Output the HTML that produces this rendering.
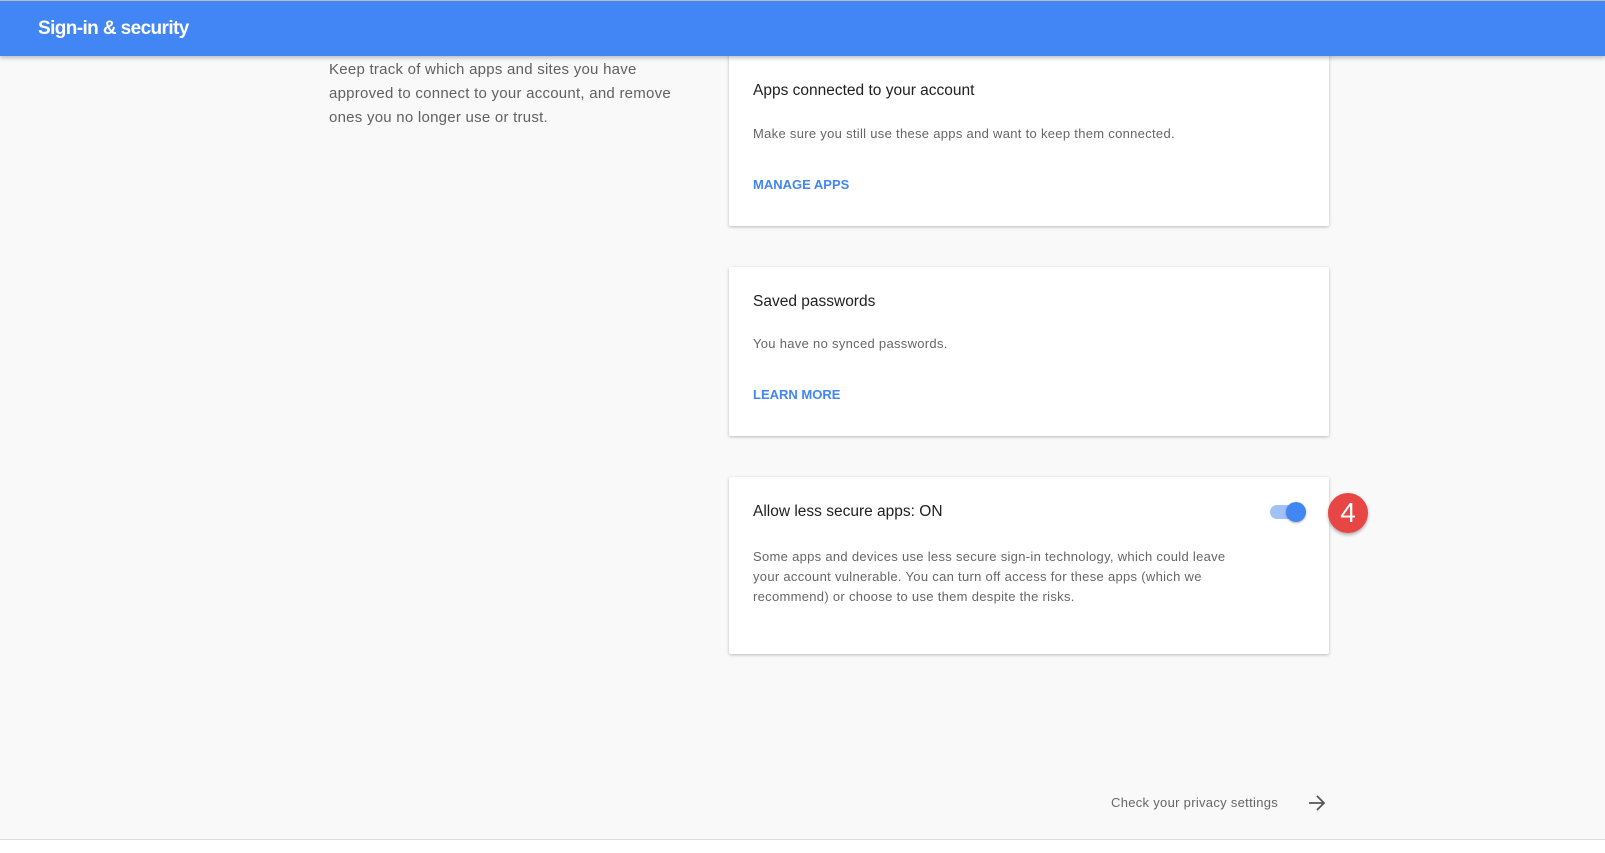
<!DOCTYPE html><html><head><style>
*{margin:0;padding:0;box-sizing:border-box}
body{width:1605px;height:853px;background:#f9f9f9;font-family:"Liberation Sans",sans-serif;position:relative;overflow:hidden}
.hdr{position:absolute;left:0;top:0;width:1605px;height:56px;background:#4285f4;border-top:1px solid #bbb;box-shadow:0 2px 4px rgba(0,0,0,.25);z-index:2}
.hdr span{position:absolute;left:38px;top:17px;color:#fff;font-size:19px;font-weight:bold;letter-spacing:-.6px}
.lt{position:absolute;left:329px;top:58px;width:370px;font-size:15px;line-height:24px;color:#616161;letter-spacing:.25px}
.card{position:absolute;left:729px;width:600px;background:#fff;box-shadow:0 1px 3px rgba(0,0,0,.25);border-radius:2px}
.t{position:absolute;left:24px;font-size:15.5px;color:#212121}
.d{position:absolute;left:24px;font-size:13px;color:#666;line-height:20px;letter-spacing:.3px}
.l{position:absolute;left:24px;font-size:13px;font-weight:bold;color:#4285f4}
.foot{position:absolute;left:0;top:839px;width:1605px;height:14px;background:#fff;border-top:1px solid #ddd}
</style></head><body>
<div class="hdr"><span>Sign-in &amp; security</span></div>
<div class="lt">Keep track of which apps and sites you have approved to connect to your account, and remove ones you no longer use or trust.</div>
<div class="card" style="top:50px;height:176px"><div class="t" style="top:32px">Apps connected to your account</div><div class="d" style="top:74px">Make sure you still use these apps and want to keep them connected.</div><div class="l" style="top:127px">MANAGE APPS</div></div>
<div class="card" style="top:267px;height:169px"><div class="t" style="top:26px">Saved passwords</div><div class="d" style="top:67px">You have no synced passwords.</div><div class="l" style="top:120px">LEARN MORE</div></div>
<div class="card" style="top:477px;height:177px"><div class="t" style="top:26px">Allow less secure apps: ON</div><div class="d" style="top:70px;width:485px">Some apps and devices use less secure sign-in technology, which could leave your account vulnerable. You can turn off access for these apps (which we recommend) or choose to use them despite the risks.</div>
<div style="position:absolute;left:541px;top:28px;width:36px;height:14px;border-radius:7px;background:#a0c2f9"></div>
<div style="position:absolute;left:557px;top:25px;width:20px;height:20px;border-radius:50%;background:#4285f4;box-shadow:0 1px 2px rgba(0,0,0,.3)"></div></div>
<div style="position:absolute;left:1328px;top:493px;width:40px;height:40px;border-radius:50%;background:#e84545;box-shadow:0 2px 3px rgba(0,0,0,.3);color:#fff;font-size:28px;text-align:center;line-height:40px">4</div>
<div style="position:absolute;left:1111px;top:795px;font-size:13px;color:#666;letter-spacing:.3px">Check your privacy settings</div>
<svg style="position:absolute;left:1307px;top:793px" width="20" height="20" viewBox="0 0 20 20"><path d="M2 10H17M10 3L17 10L10 17" stroke="#555" stroke-width="1.8" fill="none"/></svg>
<div class="foot"></div>
</body></html>
